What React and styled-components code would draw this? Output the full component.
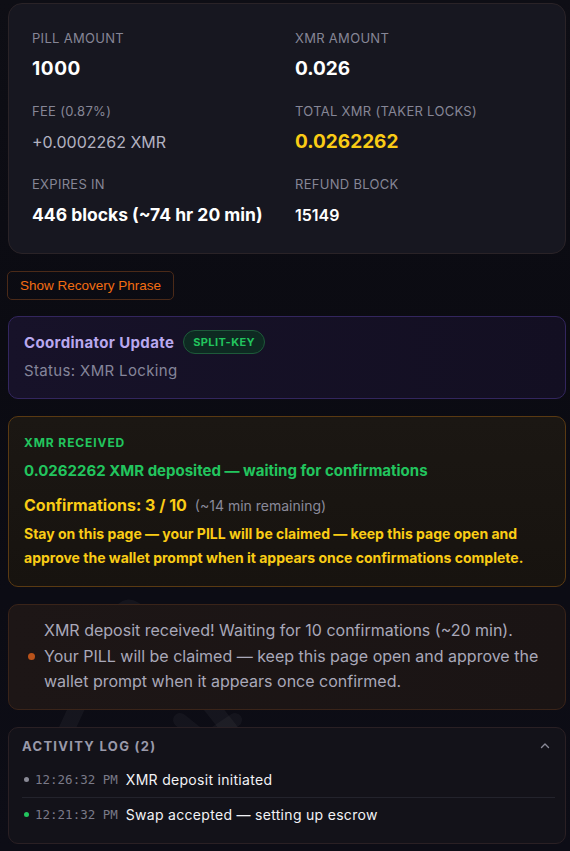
import styled, { createGlobalStyle } from 'styled-components';

const Global = createGlobalStyle`
  html, body { margin: 0; padding: 0; }
  body {
    background: #0c0c12;
    font-family: Inter, "DejaVu Sans", sans-serif;
    color: #e8e8ee;
  }
`;

const Page = styled.div`
  position: relative;
  min-height: 851px;
  padding: 3px 4px 8px 8px;
  box-sizing: border-box;
  display: flex;
  flex-direction: column;
  overflow: hidden;
  background: linear-gradient(180deg, #0e0e15 0%, #0b0b12 40%, #0d0d16 100%);
`;

const Watermark = styled.svg`
  position: absolute;
  left: 30px;
  top: 580px;
  width: 260px;
  height: 200px;
  pointer-events: none;
`;

const Stack = styled.div`
  position: relative;
  display: flex;
  flex-direction: column;
  align-items: flex-start;
`;

const Card = styled.section`
  box-sizing: border-box;
  width: 558px;
  border-radius: ${p => p.$radius || 10}px;
  border: 1px solid ${p => p.$border};
  background: ${p => p.$bg};
  padding: ${p => p.$pad};
  margin-top: ${p => p.$mt || 0}px;
`;

const StatGrid = styled.div`
  display: grid;
  grid-template-columns: 263px 1fr;
  row-gap: 22px;
`;

const Stat = styled.div`
  display: flex;
  flex-direction: column;
  gap: 11px;
`;

const Label = styled.div`
  font-size: 13px;
  line-height: 18px;
  color: #868696;
  letter-spacing: 0.3px;
  text-transform: uppercase;
`;

const Value = styled.div`
  font-size: ${p => p.$size || 19}px;
  line-height: 22px;
  font-weight: ${p => p.$weight || 700};
  letter-spacing: ${p => p.$ls || 0}px;
  color: ${p => p.$color || '#ffffff'};
`;

const RecoveryButton = styled.button`
  margin: 17px 0 0 -1px;
  height: 29px;
  padding: 0 12px;
  background: transparent;
  border: 1px solid #4b2a18;
  border-radius: 5px;
  color: #f36d12;
  font-family: "Liberation Sans", Arial, sans-serif;
  font-size: 13.5px;
  cursor: pointer;
`;

const TitleRow = styled.div`
  display: flex;
  align-items: center;
  gap: 9px;
`;

const CoordTitle = styled.div`
  font-size: 15px;
  font-weight: 700;
  letter-spacing: 0.35px;
  color: #b9a8ee;
`;

const Badge = styled.span`
  display: inline-flex;
  align-items: center;
  height: 24px;
  box-sizing: border-box;
  padding: 0 9px;
  border-radius: 12px;
  border: 1px solid #1e5a3a;
  background: #0e2a22;
  color: #22c55e;
  font-size: 11px;
  font-weight: 700;
  letter-spacing: 0.4px;
`;

const Muted = styled.div`
  margin-top: 8px;
  font-size: 15px;
  line-height: 18px;
  letter-spacing: 0.35px;
  color: #85859a;
`;

const Eyebrow = styled.div`
  font-size: 12px;
  font-weight: 700;
  color: #22c55e;
  letter-spacing: 0.9px;
`;

const Line = styled.div`
  margin-top: ${p => p.$mt || 0}px;
  font-size: ${p => p.$size}px;
  line-height: ${p => p.$lh || 22}px;
  font-weight: 700;
  color: ${p => p.$color};
`;

const Remaining = styled.span`
  margin-left: 8px;
  font-size: 14px;
  font-weight: 400;
  color: #8a8a9a;
`;

const NoticeRow = styled.div`
  display: flex;
  align-items: center;
  gap: 9px;
`;

const Dot = styled.span`
  flex: none;
  width: ${p => p.$size || 6}px;
  height: ${p => p.$size || 6}px;
  border-radius: 50%;
  background: ${p => p.$color};
`;

const NoticeText = styled.div`
  font-size: 16px;
  line-height: 25.5px;
  color: #a9a8b9;
`;

const LogHeader = styled.div`
  display: flex;
  align-items: center;
  justify-content: space-between;
  height: 16px;
  padding-right: 15px;
`;

const LogTitle = styled.div`
  font-size: 13px;
  font-weight: 700;
  letter-spacing: 1.3px;
  color: #9a9aaa;
`;

const LogList = styled.div`
  margin-top: 9px;
  display: flex;
  flex-direction: column;
`;

const LogRow = styled.div`
  display: flex;
  align-items: center;
  gap: 6px;
  height: 34px;
  padding-left: 2px;
  margin-right: 10px;
  border-bottom: ${p => (p.$last ? 'none' : '1px solid #23232c')};
`;

const Time = styled.span`
  font-family: "DejaVu Sans Mono", "Liberation Mono", monospace;
  font-size: 12.5px;
  color: #7a7a88;
  margin-right: 2px;
`;

const LogText = styled.span`
  font-size: 14px;
  letter-spacing: 0.3px;
  color: #f2f2f6;
`;

const Chevron = () => (
  <svg width="10" height="8" viewBox="0 0 10 8" fill="none">
    <path d="M1.5 5.5 L5 2 L8.5 5.5" stroke="#8a8a98" strokeWidth="1.4" strokeLinecap="round" strokeLinejoin="round" />
  </svg>
);

const stats = [
  { label: 'PILL AMOUNT', value: '1000', ls: 0.6 },
  { label: 'XMR AMOUNT', value: '0.026' },
  { label: 'FEE (0.87%)', value: '+0.0002262 XMR', size: 16, weight: 400, color: '#b2b2c0' },
  { label: 'TOTAL XMR (TAKER LOCKS)', value: '0.0262262', color: '#facc15' },
  { label: 'EXPIRES IN', value: '446 blocks (~74 hr 20 min)', size: 17.5 },
  { label: 'REFUND BLOCK', value: '15149', size: 16, weight: 600 },
];

const logs = [
  { time: '12:26:32 PM', text: 'XMR deposit initiated', color: '#8a8a96' },
  { time: '12:21:32 PM', text: 'Swap accepted — setting up escrow', color: '#22c55e' },
];

export default function App() {
  return (
    <>
      <Global />
      <Page>
        <Watermark viewBox="0 0 260 200" fill="none">
          <path d="M18 190 L88 38 Q98 18 110 36 L200 150" stroke="rgba(255,255,255,0.04)" strokeWidth="16" strokeLinecap="round" strokeLinejoin="round" />
          <path d="M150 140 L175 160 L205 140" stroke="rgba(255,255,255,0.035)" strokeWidth="14" strokeLinecap="round" strokeLinejoin="round" />
        </Watermark>
        <Stack>
          <Card $radius={14} $border="#2a2327" $bg="#171720" $pad="25px 23px 27px 23px">
            <StatGrid>
              {stats.map(s => (
                <Stat key={s.label}>
                  <Label>{s.label}</Label>
                  <Value $size={s.size} $weight={s.weight} $color={s.color} $ls={s.ls}>{s.value}</Value>
                </Stat>
              ))}
            </StatGrid>
          </Card>

          <RecoveryButton>Show Recovery Phrase</RecoveryButton>

          <Card $mt={16} $border="#33265e" $bg="linear-gradient(90deg, #171229 0%, #130f22 100%)" $pad="13px 15px 18px 15px">
            <TitleRow>
              <CoordTitle>Coordinator Update</CoordTitle>
              <Badge>SPLIT-KEY</Badge>
            </TitleRow>
            <Muted>Status: XMR Locking</Muted>
          </Card>

          <Card $mt={17} $border="#5a3a12" $bg="linear-gradient(180deg, #1b1713 0%, #17130f 100%)" $pad="18px 15px 16px 15px">
            <Eyebrow>XMR RECEIVED</Eyebrow>
            <Line $mt={10} $size={15} $color="#22c55e">0.0262262 XMR deposited — waiting for confirmations</Line>
            <Line $mt={12} $size={16} $color="#facc15">
              Confirmations: 3 / 10<Remaining>(~14 min remaining)</Remaining>
            </Line>
            <Line $mt={5} $size={14} $lh={24} $color="#facc15">
              Stay on this page — your PILL will be claimed — keep this page open and approve the wallet prompt when it appears once confirmations complete.
            </Line>
          </Card>

          <Card $mt={17} $border="#3a2419" $bg="linear-gradient(90deg, #1d1616 0%, #1a1414 100%)" $pad="13px 20px 14px 19px">
            <NoticeRow>
              <Dot $size={7} $color="#b9521a" />
              <NoticeText>
                XMR deposit received! Waiting for 10 confirmations (~20 min). Your PILL will be claimed — keep this page open and approve the wallet prompt when it appears once confirmed.
              </NoticeText>
            </NoticeRow>
          </Card>

          <Card $mt={17} $border="#2a2024" $bg="#131219" $pad="10px 0 11px 13px">
            <LogHeader>
              <LogTitle>ACTIVITY LOG (2)</LogTitle>
              <Chevron />
            </LogHeader>
            <LogList>
              {logs.map((l, i) => (
                <LogRow key={l.time} $last={i === logs.length - 1}>
                  <Dot $size={5} $color={l.color} />
                  <Time>{l.time}</Time>
                  <LogText>{l.text}</LogText>
                </LogRow>
              ))}
            </LogList>
          </Card>
        </Stack>
      </Page>
    </>
  );
}
